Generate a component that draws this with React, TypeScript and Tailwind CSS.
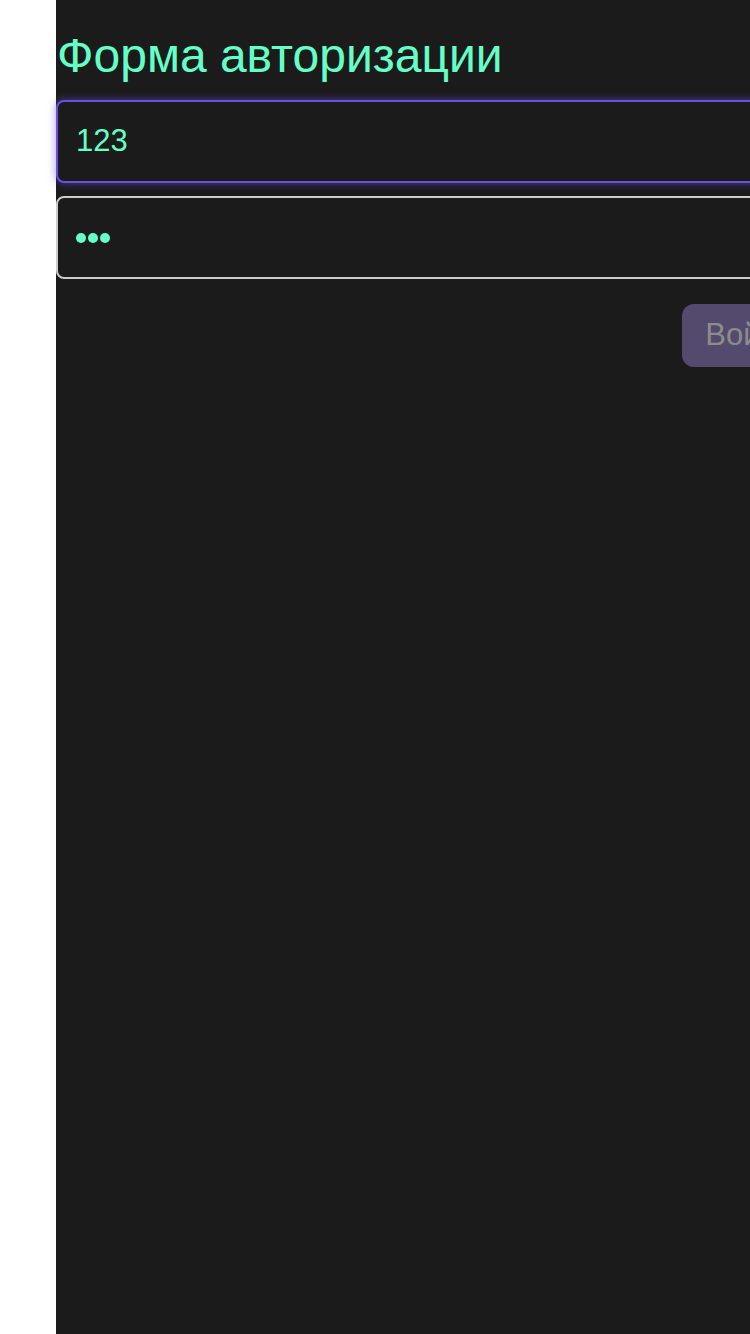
import React from "react";

export default function App() {
  return (
    <div className="min-h-[1334px] w-[750px] overflow-hidden bg-white" style={{ fontFamily: '"Liberation Sans", Arial, sans-serif' }}>
      <div className="ml-[56px] w-[762px] min-h-[1334px] bg-[#1b1b1b] pt-[28px]">
        <h1 className="pl-[1px] text-[48px] leading-[56px] text-[#64ffc8]">Форма авторизации</h1>
        <div className="mt-[16px] flex flex-col gap-[13px]">
          <div className="flex h-[83px] items-center rounded-[8px] border-2 border-[#6b4ee6] bg-[#1b1b1b] pl-[18px] text-[31px] text-[#64ffc8] shadow-[0_0_8px_rgba(107,78,230,0.6)]">
            123
          </div>
          <div className="flex h-[83px] items-center rounded-[8px] border-2 border-[#cccccc] bg-[#1b1b1b] pl-[18px] text-[#64ffc8]">
            <span className="flex gap-[2px]">
              <span className="h-[10px] w-[10px] rounded-full bg-[#64ffc8]" />
              <span className="h-[10px] w-[10px] rounded-full bg-[#64ffc8]" />
              <span className="h-[10px] w-[10px] rounded-full bg-[#64ffc8]" />
            </span>
          </div>
        </div>
        <div className="mt-[25px] flex justify-end">
          <button className="h-[63px] rounded-[12px] bg-[#544a6e] pl-[23px] pr-[26px] text-[31px] text-[#8c8c8c]">Войти</button>
        </div>
      </div>
    </div>
  );
}
